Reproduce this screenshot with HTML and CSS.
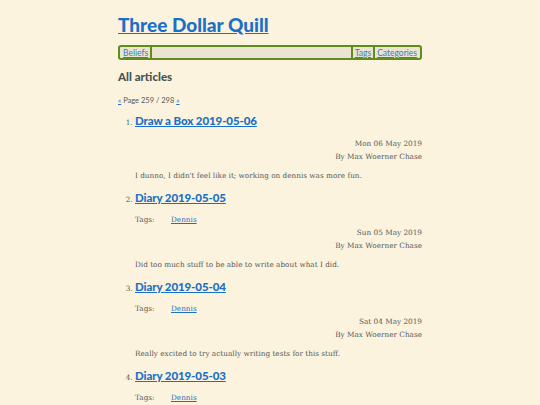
FILE: index.html
```html
<!DOCTYPE html>
<html>
<head>
<meta charset="utf-8">
<title>Three Dollar Quill</title>
<link rel="stylesheet" href="styles.css">
</head>
<body>
<div class="page">
  <header class="site-header">
    <a class="site-title" href="#">Three Dollar Quill</a>
  </header>
  <nav class="nav">
    <a href="#">Beliefs</a>
    <span class="sep"></span>
    <span class="spacer"></span>
    <span class="sep"></span>
    <a href="#">Tags</a>
    <span class="sep"></span>
    <a href="#">Categories</a>
  </nav>
  <h2 class="section-title">All articles</h2>
  <p class="pager"><a href="#">«</a> Page 259 / 298 <a href="#">»</a></p>
  <ol class="articles">
    <li class="article">
      <a class="article-title" href="#">Draw a Box 2019-05-06</a>
      <div class="meta">
        <div>Mon 06 May 2019</div>
        <div>By Max Woerner Chase</div>
      </div>
      <p class="summary">I dunno, I didn't feel like it; working on dennis was more fun.</p>
    </li>
    <li class="article">
      <a class="article-title" href="#">Diary 2019-05-05</a>
      <div class="tags"><span class="tags-label">Tags:</span><a href="#">Dennis</a></div>
      <div class="meta">
        <div>Sun 05 May 2019</div>
        <div>By Max Woerner Chase</div>
      </div>
      <p class="summary">Did too much stuff to be able to write about what I did.</p>
    </li>
    <li class="article">
      <a class="article-title" href="#">Diary 2019-05-04</a>
      <div class="tags"><span class="tags-label">Tags:</span><a href="#">Dennis</a></div>
      <div class="meta">
        <div>Sat 04 May 2019</div>
        <div>By Max Woerner Chase</div>
      </div>
      <p class="summary">Really excited to try actually writing tests for this stuff.</p>
    </li>
    <li class="article">
      <a class="article-title" href="#">Diary 2019-05-03</a>
      <div class="tags"><span class="tags-label">Tags:</span><a href="#">Dennis</a></div>
    </li>
  </ol>
</div>
</body>
</html>
```
FILE: styles.css
```css
html, body {
  margin: 0;
  padding: 0;
  background: #fbf3dd;
}
body {
  font-family: "DejaVu Serif", "Liberation Serif", serif;
  color: #555a5c;
  font-size: 8px;
}
.page {
  width: 304px;
  margin: 0 auto;
}
a {
  color: #1f6fc5;
}
.site-header {
  padding-top: 14px;
  height: 31px;
}
.site-title {
  font-family: Lato, "Open Sans", sans-serif;
  font-weight: 900;
  font-size: 19px;
  line-height: 22px;
  color: #1a70c6;
}
.nav {
  display: flex;
  align-items: center;
  height: 11px;
  border: 2px solid #5d8d1c;
  border-radius: 3px;
  background: #ebe4d3;
  padding: 0 1px;
  font-family: Lato, "Open Sans", sans-serif;
  font-size: 8.5px;
}
.nav a {
  color: #3a7cc2;
  padding: 0 2px;
}
.sep {
  width: 2px;
  height: 11px;
  background: #5d8d1c;
}
.spacer {
  flex: 1;
}
.section-title {
  font-family: Lato, "Open Sans", sans-serif;
  font-weight: 900;
  font-size: 11.5px;
  color: #4a5254;
  margin: 9px 0 0;
  line-height: 16px;
}
.pager {
  font-family: Lato, "Open Sans", sans-serif;
  font-size: 7.5px;
  margin: 11px 0 0;
  line-height: 10px;
}
.articles {
  margin: 7px 0 0;
  padding-left: 17px;
}
.article {
  font-size: 7.3px;
}
.article-title {
  font-family: Lato, "Open Sans", sans-serif;
  font-weight: 900;
  font-size: 11.5px;
  letter-spacing: -0.1px;
  line-height: 16px;
  color: #1a70c6;
}
.tags {
  margin-top: 7px;
  display: flex;
  line-height: 13px;
}
.tags-label {
  width: 36px;
}
.meta {
  text-align: right;
  line-height: 12.5px;
  margin-top: 9px;
}
.tags + .meta {
  margin-top: 1px;
}
.summary {
  margin: 7px 0 8px;
  line-height: 12px;
}
```
